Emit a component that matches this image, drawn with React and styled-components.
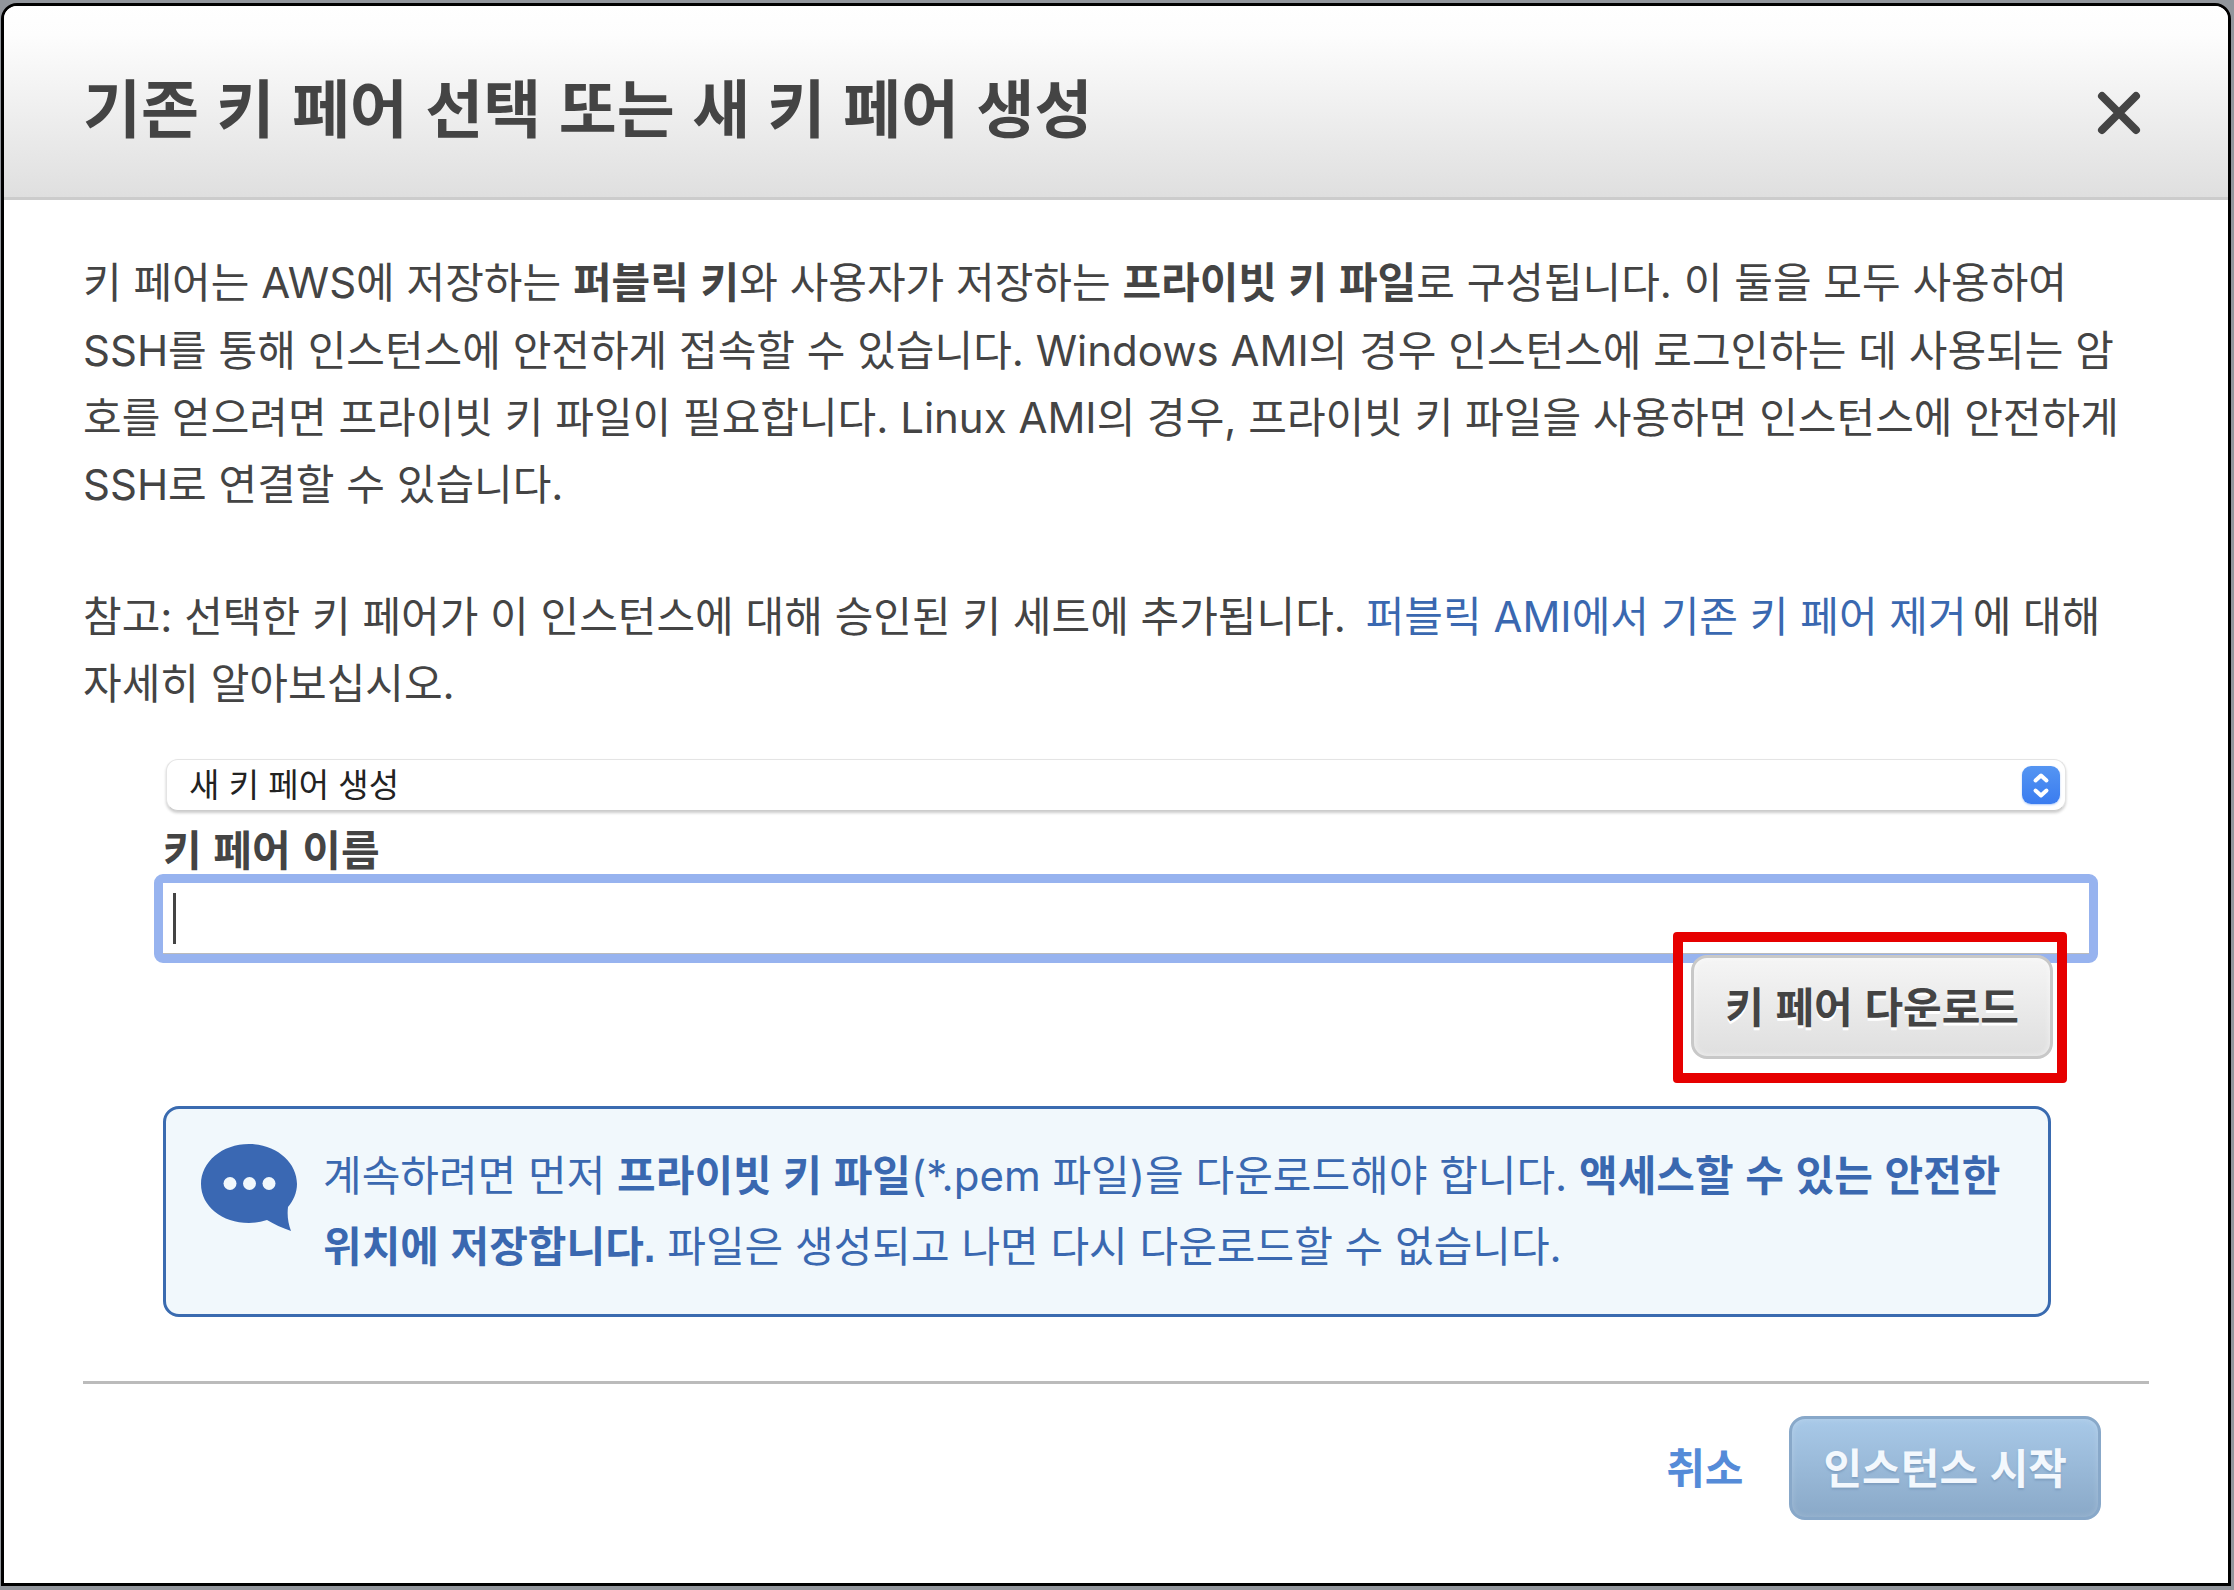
import React, { useState } from 'react'
import styled, { createGlobalStyle } from 'styled-components'

const boldFont = "'Liberation Sans', 'Noto Sans CJK KR', sans-serif"

const GlobalStyle = createGlobalStyle`
  * {
    box-sizing: border-box;
  }
  body {
    margin: 0;
    background: #92969c;
    color: #444;
    font-family: Inter, 'Noto Sans CJK KR', sans-serif;
    font-size: 42px;
    line-height: 67px;
  }
  button, input, select {
    font-family: inherit;
  }
  b {
    font-family: ${boldFont};
  }
`

const Page = styled.div`
  display: flex;
  min-height: 100vh;
  padding: 3px 3px 4px 1px;
`

const Modal = styled.div`
  flex: 1;
  min-width: 0;
  background: #fff;
  border: 3px solid #000;
  border-radius: 16px 16px 0 0;
  overflow: hidden;
`

const Header = styled.header`
  display: flex;
  align-items: center;
  justify-content: space-between;
  height: 194px;
  padding: 22px 85px 0 79px;
  background: linear-gradient(#fff, #fdfdfd 15%, #dfdfdf);
  border-bottom: 3px solid #ccc;
`

const Title = styled.h1`
  margin: 0;
  padding-bottom: 6px;
  font-family: ${boldFont};
  font-size: 63px;
  line-height: 90px;
  font-weight: 700;
`

const CloseButton = styled.button`
  display: flex;
  padding: 0;
  border: 0;
  background: none;
  cursor: pointer;
`

const Body = styled.main`
  padding: 49px 79px 0;
`

const Text = styled.p`
  margin: 0 0 65px;
  padding-right: 12px;
`

const Link = styled.a`
  margin: 0 6px 0 8px;
  color: #3a68b0;
  text-decoration: none;
`

const Form = styled.form`
  display: flex;
  flex-direction: column;
  margin-top: -23px;
  padding: 0 80px;
`

const SelectBox = styled.div`
  position: relative;
  margin: 0 3px;
`

const Select = styled.select`
  display: block;
  width: 100%;
  height: 52px;
  padding: 0 64px 0 22px;
  border: 1px solid #e4e4e4;
  border-bottom-color: #ccc;
  border-radius: 12px;
  background: #fff;
  box-shadow: 0 2px 3px rgba(0, 0, 0, 0.2);
  color: #222;
  font-size: 33px;
  appearance: none;
`

const Stepper = styled.span`
  position: absolute;
  top: 7px;
  right: 6px;
  display: flex;
  width: 38px;
  height: 38px;
  border-radius: 9px;
  background: linear-gradient(#5595f2, #3a7cf0);
  box-shadow: 0 1px 2px rgba(58, 124, 240, 0.4);
  pointer-events: none;
`

const Label = styled.label`
  margin-top: 11px;
  font-family: ${boldFont};
  line-height: 60px;
  font-weight: 700;
`

const NameInput = styled.input`
  width: calc(100% + 38px);
  height: 89px;
  margin: -8px -9px 0;
  padding: 0 10px;
  border: 9px solid #97b3ef;
  border-radius: 9px;
  outline: none;
  background: linear-gradient(#444, #444) 10px 50% / 3px 51px no-repeat #fff;
  box-shadow: inset 0 -1px 0 #bbb;
  color: #444;
  font-size: 42px;
  caret-color: transparent;
`

const DownloadRow = styled.div`
  display: flex;
  justify-content: flex-end;
  margin: -8px 16px 0 0;
`

const Highlight = styled.div`
  position: relative;

  &::after {
    content: '';
    position: absolute;
    inset: -23px -14px -24px -18px;
    border: 10px solid #e60000;
    border-radius: 4px;
    pointer-events: none;
  }
`

const Button = styled.button`
  display: block;
  height: 104px;
  padding: 0 31px 6px;
  border: 3px solid ${props => props.$primary ? '#88a8c9' : '#c8c8c8'};
  border-radius: 16px;
  background: ${props => props.$primary
    ? 'linear-gradient(#a8c9e8, #8aa9c8)'
    : 'linear-gradient(#f5f5f5, #dfdfdf)'};
  box-shadow: inset 0 0 6px rgba(255, 255, 255, ${props => props.$primary ? 0.2 : 0.6});
  color: ${props => props.$primary ? '#f3f8fd' : '#444'};
  text-shadow: ${props => props.$primary ? '0 2px 2px #7f9fc0' : '0 3px 0 #fff'};
  font-family: ${boldFont};
  font-size: 42px;
  font-weight: 700;
  white-space: nowrap;
  cursor: pointer;
`

const Notice = styled.div`
  display: flex;
  gap: 26px;
  margin: 47px 18px 0 0;
  padding: 32px 40px 31px 35px;
  border: 3px solid #3a6bb0;
  border-radius: 16px;
  background: #f1f8fc;
  color: #3a68b0;
  line-height: 70px;
`

const NoticeText = styled.p`
  flex: 1;
  margin: 0;
`

const BubbleIcon = styled.svg`
  flex: none;
  width: 96px;
  height: 88px;
  margin-top: 3px;
`

const Footer = styled.footer`
  display: flex;
  align-items: center;
  justify-content: flex-end;
  gap: 46px;
  margin-top: 64px;
  padding: 32px 48px 63px 0;
  border-top: 3px solid #bbb;
`

const CancelButton = styled.button`
  padding: 0 0 6px;
  border: 0;
  background: none;
  color: #558bd8;
  font-family: ${boldFont};
  font-size: 42px;
  font-weight: 700;
  cursor: pointer;
`

const App = () => {
  const [mode, setMode] = useState('new')
  const [name, setName] = useState('')

  return (
    <>
      <GlobalStyle />
      <Page>
        <Modal role="dialog" aria-labelledby="title">
          <Header>
            <Title id="title">기존 키 페어 선택 또는 새 키 페어 생성</Title>
            <CloseButton type="button" aria-label="닫기">
              <svg width="48" height="48" viewBox="0 0 48 48">
                <path d="M7 7L41 41M41 7L7 41" stroke="#444" strokeWidth="8" strokeLinecap="round" />
              </svg>
            </CloseButton>
          </Header>

          <Body>
            <Text>
              키 페어는 AWS에 저장하는 <b>퍼블릭 키</b>와 사용자가 저장하는 <b>프라이빗 키 파일</b>로
              구성됩니다. 이 둘을 모두 사용하여 SSH를 통해 인스턴스에 안전하게 접속할 수 있습니다.
              Windows AMI의 경우 인스턴스에 로그인하는 데 사용되는 암호를 얻으려면 프라이빗 키
              파일이 필요합니다. Linux AMI의 경우, 프라이빗 키 파일을 사용하면 인스턴스에 안전하게
              SSH로 연결할 수 있습니다.
            </Text>
            <Text>
              참고: 선택한 키 페어가 이 인스턴스에 대해 승인된 키 세트에 추가됩니다.
              {' '}<Link href="#remove">퍼블릭 AMI에서 기존 키 페어 제거</Link>에 대해 자세히 알아보십시오.
            </Text>

            <Form onSubmit={e => e.preventDefault()}>
              <SelectBox>
                <Select aria-label="키 페어 옵션" value={mode} onChange={e => setMode(e.target.value)}>
                  <option value="new">새 키 페어 생성</option>
                </Select>
                <Stepper>
                  <svg width="38" height="38" viewBox="0 0 38 38" fill="none">
                    <path
                      d="M13.5 14.5L19 9.5L24.5 14.5M13.5 24.5L19 29.5L24.5 24.5"
                      stroke="#fff"
                      strokeWidth="4"
                      strokeLinecap="round"
                      strokeLinejoin="round"
                    />
                  </svg>
                </Stepper>
              </SelectBox>

              <Label htmlFor="keyName">키 페어 이름</Label>
              <NameInput id="keyName" type="text" value={name} onChange={e => setName(e.target.value)} />

              <DownloadRow>
                <Highlight>
                  <Button type="button">키 페어 다운로드</Button>
                </Highlight>
              </DownloadRow>

              <Notice>
                <BubbleIcon viewBox="0 0 96 88">
                  <path
                    fill="#3a68b3"
                    d="M48 0C75 0 96 18 96 40C96 49 92 57 87 63C86 71 87 79 90 87C81 84 73 80 66 76C60 78 54 79 48 79C21 79 0 62 0 40C0 18 21 0 48 0Z"
                  />
                  <g fill="#f1f8fc">
                    <circle cx="29" cy="39.5" r="6.5" />
                    <circle cx="48.5" cy="39.5" r="6.5" />
                    <circle cx="68" cy="39.5" r="6.5" />
                  </g>
                </BubbleIcon>
                <NoticeText>
                  계속하려면 먼저 <b>프라이빗 키 파일</b>(*.pem 파일)을 다운로드해야 합니다.{' '}
                  <b>액세스할 수 있는 안전한 위치에 저장합니다.</b> 파일은 생성되고 나면 다시
                  다운로드할 수 없습니다.
                </NoticeText>
              </Notice>
            </Form>

            <Footer>
              <CancelButton type="button">취소</CancelButton>
              <Button type="button" $primary>인스턴스 시작</Button>
            </Footer>
          </Body>
        </Modal>
      </Page>
    </>
  )
}

export default App
